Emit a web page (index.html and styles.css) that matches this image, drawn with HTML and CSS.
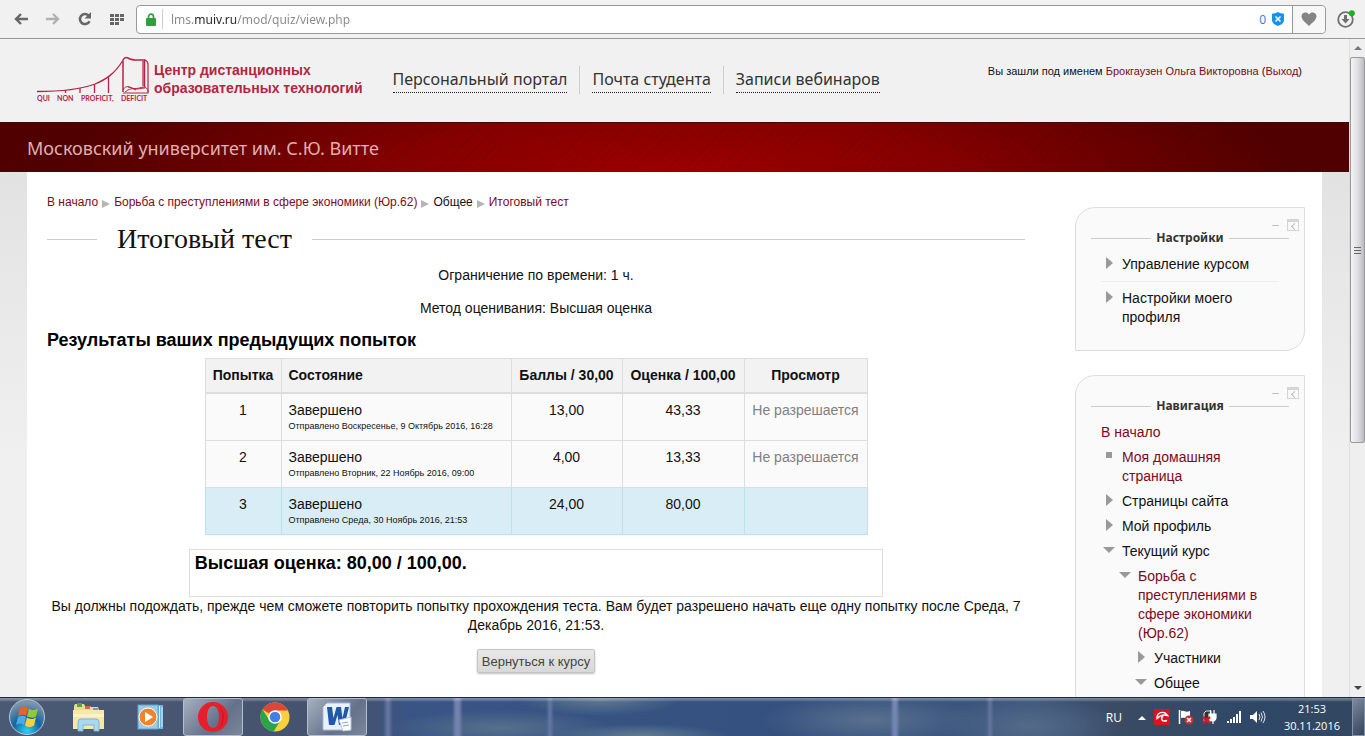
FILE: index.html
```html
<!DOCTYPE html>
<html lang="ru">
<head>
  <meta charset="UTF-8" />
  <title>Итоговый тест</title>
  <link rel="stylesheet" href="styles.css">
</head>
<body>
  <!-- Browser toolbar -->
  <div class="toolbar">
    <button class="tool" aria-label="Назад">
      <svg width="14" height="12" viewBox="0 0 14 12" fill="none" stroke="#666" stroke-width="2.4"><path d="M14 6H2M7 1L2 6l5 5"/></svg>
    </button>
    <button class="tool" aria-label="Вперед">
      <svg width="14" height="12" viewBox="0 0 14 12" fill="none" stroke="#b0b0b0" stroke-width="2.4"><path d="M0 6h12M7 1l5 5-5 5"/></svg>
    </button>
    <button class="tool" aria-label="Обновить">
      <svg width="14" height="14" viewBox="0 0 14 14"><path d="M11.5 9.2A5 5 0 1 1 10.4 3.4" fill="none" stroke="#666" stroke-width="2.6"/><path d="M13 0v6.5H6.500z" fill="#666"/></svg>
    </button>
    <button class="tool" aria-label="Экспресс-панель">
      <svg width="14" height="11" viewBox="0 0 14 11" fill="#666"><path d="M0 0h4v3H0zM5 0h4v3H5zM10 0h4v3h-4zM0 4h4v3H0zM5 4h4v3H5zM10 4h4v3h-4zM0 8h4v3H0zM5 8h4v3H5z"/></svg>
    </button>
    <div class="address">
      <svg width="10" height="13" viewBox="0 0 10 13"><path d="M2.5 6V4a2.5 2.8 0 0 1 5 0v2" fill="none" stroke="#2f9e3d" stroke-width="1.7"/><rect y="5" width="10" height="8" rx="1" fill="#2f9e3d"/></svg>
      <input class="url" type="text" value="lms.muiv.ru/mod/quiz/view.php" aria-label="Адрес">
      <span class="blocked">0</span>
      <svg width="12" height="14" viewBox="0 0 12 14"><path d="M6 0c2 1.3 4 1.7 6 1.7V8c0 3-3 5-6 6-3-1-6-3-6-6V1.7C2 1.7 4 1.3 6 0z" fill="#1592f0"/><path d="M3.5 4.5l5 5m0-5l-5 5" stroke="#fff" stroke-width="1.5"/></svg>
      <button class="heart" aria-label="Добавить в закладки">
        <svg width="16" height="14" viewBox="0 0 16 14"><path d="M8 14C6.5 12 .5 8.500.5 4.300.5.2 6-1 8 2.500 10-1 15.500.2 15.500 4.300 15.500 8.500 9.500 12 8 14z" fill="#848484"/></svg>
      </button>
    </div>
    <button class="tool" aria-label="Загрузки">
      <svg width="18" height="18" viewBox="0 0 18 18"><circle cx="8.5" cy="9.5" r="7.3" fill="none" stroke="#707070" stroke-width="1.8"/><path d="M7 5h3v4h2.500l-4 4.500-4-4.500H7z" fill="#707070"/><circle cx="14.8" cy="3.2" r="3" fill="#1bb31b"/></svg>
    </button>
  </div>

  <div class="viewport">
    <div class="page">
      <header class="site-header">
        <a class="logo" href="#">
          <svg width="112" height="46" viewBox="0 0 112 46" fill="none" stroke="#b32542" stroke-width="1">
            <path d="M0 35.500C22 35.500 42 34 58 28 70 23 78 17 85.500 5" stroke-width="1.3"/>
            <path d="M28.500 34v3M43 32v5M57.500 28v9M71.500 21v16" stroke-width="1.3"/>
            <path d="M86 36V4c1-2 3-3 5-2 5 3 9 2 15 2h1.500v27" stroke-width="1.5"/>
            <path d="M107 4c2 0 4 2 4 4v29H86M106 5v25" stroke-width="1.2"/>
            <path d="M86 34c2-4 5-4 9-2s8-1 13-1c2 1 3 3 3 5M88 36c4-3 7-4 11-3 4 0 6-1 9-1M91 31c3 0 5 2 8 3"/>
            <text class="motto" x="0" y="45">QUI</text>
            <text class="motto" x="20" y="45">NON</text>
            <text class="motto" x="44" y="45">PROFICIT,</text>
            <text class="motto" x="84" y="45">DEFICIT</text>
          </svg>
          <span>Центр дистанционных<br>образовательных технологий</span>
        </a>
        <nav class="top-nav">
          <div><a href="#">Персональный портал</a></div>
          <div><a href="#">Почта студента</a></div>
          <div><a href="#">Записи вебинаров</a></div>
        </nav>
        <p class="login-info">Вы зашли под именем <a href="#">Брокгаузен Ольга Викторовна</a> (<a href="#">Выход</a>)</p>
      </header>

      <div class="banner">Московский университет им. С.Ю. Витте</div>

      <div class="content">
        <main>
          <nav class="breadcrumb">
            <a href="#">В начало</a><i class="crumb"></i><a href="#">Борьба с преступлениями в сфере экономики (Юр.62)</a><i class="crumb"></i><span>Общее</span><i class="crumb"></i><a href="#">Итоговый тест</a>
          </nav>
          <h1>Итоговый тест</h1>
          <p class="info">Ограничение по времени: 1 ч.</p>
          <p class="info">Метод оценивания: Высшая оценка</p>
          <h2>Результаты ваших предыдущих попыток</h2>
          <table class="attempts">
            <colgroup><col class="col-number"><col class="col-state"><col class="col-marks"><col class="col-grade"><col class="col-review"></colgroup>
            <thead>
              <tr><th>Попытка</th><th class="state">Состояние</th><th>Баллы / 30,00</th><th>Оценка / 100,00</th><th>Просмотр</th></tr>
            </thead>
            <tbody>
              <tr><td>1</td><td class="state">Завершено<small>Отправлено Воскресенье, 9 Октябрь 2016, 16:28</small></td><td>13,00</td><td>43,33</td><td class="denied">Не разрешается</td></tr>
              <tr><td>2</td><td class="state">Завершено<small>Отправлено Вторник, 22 Ноябрь 2016, 09:00</small></td><td>4,00</td><td>13,33</td><td class="denied">Не разрешается</td></tr>
              <tr class="best"><td>3</td><td class="state">Завершено<small>Отправлено Среда, 30 Ноябрь 2016, 21:53</small></td><td>24,00</td><td>80,00</td><td></td></tr>
            </tbody>
          </table>
          <div class="feedback"><h3>Высшая оценка: 80,00 / 100,00.</h3></div>
          <p class="wait">Вы должны подождать, прежде чем сможете повторить попытку прохождения теста. Вам будет разрешено начать еще одну попытку после Среда, 7 Декабрь 2016, 21:53.</p>
          <button class="back">Вернуться к курсу</button>
        </main>

        <aside>
          <section class="block">
            <div class="block-tools"><button aria-label="Свернуть блок">–</button><button class="dock" aria-label="Прикрепить блок"></button></div>
            <h4>Настройки</h4>
            <ul class="tree ruled">
              <li><i class="right"></i><span>Управление курсом</span></li>
              <li><i class="right"></i><span>Настройки моего профиля</span></li>
            </ul>
          </section>
          <section class="block">
            <div class="block-tools"><button aria-label="Свернуть блок">–</button><button class="dock" aria-label="Прикрепить блок"></button></div>
            <h4>Навигация</h4>
            <a class="root" href="#">В начало</a>
            <ul class="tree">
              <li><i class="square"></i><a href="#">Моя домашняя страница</a></li>
              <li><i class="right"></i><span>Страницы сайта</span></li>
              <li><i class="right"></i><span>Мой профиль</span></li>
              <li><i class="down"></i><span>Текущий курс</span></li>
              <li class="level-2"><i class="down"></i><a href="#">Борьба с преступлениями в сфере экономики (Юр.62)</a></li>
              <li class="level-3"><i class="right"></i><span>Участники</span></li>
              <li class="level-3"><i class="down"></i><span>Общее</span></li>
            </ul>
          </section>
        </aside>
      </div>
    </div>
    <div class="scrollbar">
      <i class="arrow-up"></i>
      <div class="thumb"><i></i></div>
      <i class="arrow-down"></i>
    </div>
  </div>

  <!-- Windows taskbar -->
  <footer class="taskbar">
    <button class="start" aria-label="Пуск">
      <svg width="38" height="38" viewBox="0 0 38 38">
        <defs><radialGradient id="orb" cx=".5" cy=".9" r=".8"><stop offset="0" stop-color="#2fd0f5"/><stop offset=".5" stop-color="#14659f"/><stop offset="1" stop-color="#7c93ac"/></radialGradient></defs>
        <circle cx="19" cy="19" r="17.5" fill="url(#orb)" stroke="#b4c9da"/>
        <path d="M12 10c3-2 5-2 8 0l-2 8c-3-2-5-1-8 0z" fill="#e8632b"/>
        <path d="M21 10.500c3 2 5 2 9 0l-2 8c-3 2-6 1-9 0z" fill="#93c83e"/>
        <path d="M10 19c3-1 5-2 8 0l-2 8c-3-2-5-2-8 0z" fill="#4da9e8"/>
        <path d="M19 19.500c3 2 6 2 9 0l-2 8c-3 2-6 2-9 0z" fill="#fbd03c"/>
      </svg>
    </button>
    <button class="task" aria-label="Проводник">
      <svg width="34" height="30" viewBox="0 0 34 30"><path d="M3 2h9l1 2h5l1 1h7l1 3h4v19H2V4z" fill="#f3d98a"/><path d="M5 1h5v4H5z" fill="#54a34a"/><path d="M13 4h5v3h-5z" fill="#d86a45"/><path d="M21 6h5v3h-5z" fill="#5c9ed8"/><path d="M1 8h31v19H1z" fill="#f8e8a8"/><path d="M1 12h31v3H1z" fill="#fcf3c9"/><path d="M6 29V20q0-3 3-3h15q3 0 3 3v9h-5v-6H11v6z" fill="#a9d9f2" stroke="#77b5da"/></svg>
    </button>
    <button class="task" aria-label="Проигрыватель">
      <svg width="28" height="26" viewBox="0 0 28 26"><path d="M8 1h18v24H8z" fill="#6fb4dc"/><path d="M22.500 2v22M25 3v20" stroke="#d7effc"/><rect x="1" y="1" width="20" height="24" fill="#9bcbe6" stroke="#5ea4cf"/><circle cx="11" cy="13" r="9" fill="#f08426" stroke="#fff"/><path d="M8 8l8 5-8 5z" fill="#fff"/></svg>
    </button>
    <button class="task open" aria-label="Opera">
      <svg width="32" height="32" viewBox="0 0 32 32"><path fill-rule="evenodd" d="M16 1a15 15 0 1 1 0 30 15 15 0 0 1 0-30zm0 4c-4 0-6 5-6 11s2 11 6 11 6-5 6-11-2-11-6-11z" fill="#e5202b"/><path d="M21 4a15 15 0 0 1 0 24c6-6 6-18 0-24z" fill="#c91a26"/></svg>
    </button>
    <button class="task" aria-label="Chrome">
      <svg width="30" height="30" viewBox="0 0 30 30"><circle cx="15" cy="15" r="14.5" fill="#fcd03b"/><path d="M15 15L2.500 7.500A14.500 14.500 0 0 1 28 8.500H15z" fill="#db4639"/><path d="M2.500 7.500A14.500 14.500 0 0 0 13.500 29.400L20.500 18.500 15 21 9.500 18.500z" fill="#2aa34a"/><circle cx="15" cy="15" r="6.8" fill="#fff"/><circle cx="15" cy="15" r="5.3" fill="#4180e0"/></svg>
    </button>
    <button class="task open" aria-label="Word">
      <svg width="30" height="30" viewBox="0 0 30 30"><path d="M5 1h23v27H1V5z" fill="#e9f1fa" stroke="#a4bbd5"/><path d="M5 5h5l1.500 11L14.500 5H19l1.500 11L23 5h4l-4.500 18H17l-1.500-10L12.500 23H7z" fill="#2258a9"/><path d="M17 18l12-3v13l-8 1z" fill="#fff" stroke="#b4c5da"/><path d="M20 21l6-1M21 24l6-1" stroke="#86a5ca"/></svg>
    </button>
    <div class="tray">
      <span class="lang">RU</span>
      <svg width="8" height="5" viewBox="0 0 8 5"><path d="M0 5l4-4 4 4z" fill="#fff"/></svg>
      <svg width="16" height="16" viewBox="0 0 16 16"><rect width="16" height="16" rx="1" fill="#dc1220"/><path d="M3 9.500C2.500 3.500 10 1 13.500 6.500 10 5.500 6 6.500 3 9.500zM9 6.500c-3 4-1 6.500 4 5" fill="none" stroke="#fff" stroke-width="1.4"/></svg>
      <svg width="16" height="16" viewBox="0 0 16 16"><path d="M1.500 1v14" stroke="#fff" stroke-width="1.5"/><path d="M3 2c4-1 4 2 9 0v7c-5 1-5-1-9 0z" fill="#fff"/><circle cx="11" cy="11" r="4.5" fill="#d3282c"/><path d="M9 9l4 4m0-4l-4 4" stroke="#fff" stroke-width="1.5"/></svg>
      <svg width="16" height="16" viewBox="0 0 16 16"><path d="M2 4l2-2h5v10H2z" fill="#333" stroke="#ddd"/><path d="M7 5h7v4q-1 3-3 3-4 0-4-4zM8.500 1v4M12 1v4M11 12v3" fill="#fff" stroke="#fff" stroke-width="1.2"/><path d="M1 8l7 6m0-6l-7 6" stroke="#d71920" stroke-width="2.4"/></svg>
      <svg width="16" height="12" viewBox="0 0 16 12" fill="#fff"><path d="M1 10h2v2H1zM4 8h2v4H4zM7 6h2v6H7zM10 3h2v9h-2zM13 0h2v12h-2z"/></svg>
      <svg width="16" height="14" viewBox="0 0 16 14"><path d="M0 5h3l4-4v12L3 9H0z" fill="#fff"/><path d="M9 4q2 3 0 6M11 2.500q3 4.500 0 9M13 1q4 6 0 12" fill="none" stroke="#dce6ef"/></svg>
      <div class="clock">21:53<br>30.11.2016</div>
    </div>
    <button class="desktop" aria-label="Свернуть все окна"></button>
  </footer>
</body>
</html>
```
FILE: styles.css
```css
* {
  box-sizing: border-box;
  margin: 0;
  padding: 0;
}

body {
  display: flex;
  flex-direction: column;
  height: 100vh;
  overflow: hidden;
  font-family: "Liberation Sans", Arial, sans-serif;
  font-size: 14px;
  line-height: 19px;
  color: #111;
}

a {
  color: #7d0a1a;
  text-decoration: none;
}

button {
  border: none;
  background: none;
  font-family: inherit;
}

svg {
  flex: none;
  display: block;
}

/* browser toolbar */
.toolbar {
  flex: none;
  display: flex;
  align-items: center;
  gap: 2px;
  height: 39px;
  padding: 0 9px 0 6px;
  background: #f1f1f1;
  border-bottom: 1px solid #999;
}

.tool {
  display: flex;
  align-items: center;
  justify-content: center;
  width: 30px;
  height: 28px;
}

.address {
  flex: 1;
  display: flex;
  align-items: center;
  gap: 6px;
  height: 29px;
  margin: 0 0 0 2px;
  padding-left: 9px;
  background: #fff;
  border: 1px solid #999;
  border-radius: 4px;
}

.url {
  flex: 1;
  height: 20px;
  border: none;
  border-left: 1px solid #ccc;
  padding-left: 8px;
  outline: none;
  font-family: "Noto Sans", "Open Sans", sans-serif;
  font-size: 12px;
  color: #888;
}

/* the domain is darker than the rest of the address */
@supports (-webkit-background-clip: text) {
  .url {
    background: linear-gradient(to right, #888 31px, #222 31px 73px, #888 73px);
    -webkit-background-clip: text;
    -webkit-text-fill-color: transparent;
  }
}

.blocked {
  font-family: "Open Sans", "Noto Sans", sans-serif;
  font-size: 12px;
  color: #1b83d6;
}

.heart {
  display: flex;
  align-items: center;
  justify-content: center;
  width: 33px;
  height: 27px;
  margin-left: 2px;
  background: #f7f7f7;
  border-left: 1px solid #999;
  border-radius: 0 4px 4px 0;
}

.tool:last-child {
  width: 20px;
  margin-left: 8px;
}

/* page */
.viewport {
  flex: 1;
  min-height: 0;
  display: flex;
}

.page {
  flex: 1;
  display: flex;
  flex-direction: column;
  overflow: hidden;
  background: linear-gradient(#e2e2e2 130px, #f0f0f0 420px);
}

.site-header {
  flex: none;
  display: flex;
  height: 83px;
  padding: 17px 47px 0 37px;
  background: #f1f1f1;
}

.logo {
  display: flex;
  gap: 5px;
  color: #b32542;
  font-size: 14px;
  font-weight: bold;
  line-height: 18px;
  white-space: nowrap;
}

.logo span {
  padding-top: 5px;
}

.motto {
  font-family: Lato, sans-serif;
  font-size: 7px;
  font-weight: bold;
  fill: #b32542;
  stroke: none;
}

.top-nav {
  display: flex;
  padding-top: 10px;
  margin-left: 18px;
  font-family: "Noto Sans", "Open Sans", sans-serif;
  font-size: 16px;
  white-space: nowrap;
}

.top-nav div {
  height: 28px;
  padding: 0 12px;
}

.top-nav div + div {
  border-left: 1px solid #ccc;
}

.top-nav a {
  display: block;
  height: 27px;
  line-height: 27px;
  color: #333;
  border-bottom: 1px dotted #222;
}

.login-info {
  margin-left: auto;
  padding-top: 6px;
  font-size: 11px;
  white-space: nowrap;
}

.banner {
  flex: none;
  height: 50px;
  padding-left: 27px;
  border-top: 1px solid #3d0a0a;
  background:
    repeating-linear-gradient(135deg, rgba(0, 0, 0, 0.05) 0 1px, transparent 1px 6px),
    radial-gradient(ellipse 46% 260% at 50% 100%, #9c0000, #850000 45%, #500000);
  color: #e0b0b0;
  font-family: "Noto Sans", "Open Sans", sans-serif;
  font-size: 18px;
  line-height: 50px;
}

.content {
  flex: 1;
  display: flex;
  gap: 50px;
  margin: 0 27px;
  padding: 20px 17px 0 20px;
  background: #fff;
}

main {
  flex: 1;
  display: flex;
  flex-direction: column;
}

.breadcrumb {
  font-size: 12px;
  line-height: 20px;
}

.crumb {
  display: inline-block;
  margin: 0 4px;
  border-left: 8px solid #b5b5b5;
  border-top: 4px solid transparent;
  border-bottom: 4px solid transparent;
  vertical-align: -2px;
}

h1 {
  display: flex;
  align-items: center;
  gap: 20px;
  margin: 9px 0;
  color: #111;
  font-family: "Liberation Serif", Georgia, serif;
  font-size: 28px;
  font-weight: normal;
  line-height: 36px;
}

h1::before,
h1::after {
  content: "";
  width: 50px;
  height: 1px;
  background: #ccc;
}

h1::after {
  flex: 1;
}

.info {
  margin-bottom: 14px;
  text-align: center;
}

h2,
h3 {
  color: #000;
  font-size: 18px;
  line-height: 20px;
}

h2 {
  margin-bottom: 8px;
  margin-top: -2px;
}

.attempts {
  align-self: center;
  border-collapse: collapse;
  background: #fafafa;
  text-align: center;
}

.col-number {
  width: 76px;
}

.col-state {
  width: 230px;
}

.col-marks {
  width: 111px;
}

.col-grade {
  width: 122px;
}

.col-review {
  width: 123px;
}

.attempts th,
.attempts td {
  padding: 7px;
  border: 1px solid #ddd;
  vertical-align: top;
  white-space: nowrap;
}

.attempts th {
  background: #f2f2f2;
  border-bottom-width: 2px;
}

.attempts .state {
  text-align: left;
}

.attempts small {
  display: block;
  font-size: 9px;
  line-height: 13px;
}

.attempts .denied {
  color: #808080;
}

.attempts .best td {
  background: #d9edf7;
  border-color: #bce2ea;
}

.feedback {
  align-self: center;
  width: 71%;
  height: 48px;
  margin-top: 14px;
  padding: 3px 5px;
  border: 1px solid #ddd;
}

.wait {
  text-align: center;
}

.back {
  align-self: center;
  height: 24px;
  margin-top: 14px;
  padding: 0 4px;
  border: 1px solid #c4c4c4;
  border-radius: 2px;
  background: linear-gradient(#e8e8e8, #d8d8d8);
  box-shadow: 0 1px 2px rgba(0, 0, 0, 0.25);
  color: #444;
  font-size: 13px;
}

/* side blocks */
aside {
  flex: none;
  width: 230px;
  padding-top: 15px;
}

.block {
  margin-bottom: 24px;
  padding: 11px 15px 23px;
  background: #fafafa;
  border: 1px solid #ddd;
  border-radius: 20px 0;
}

.block-tools {
  display: flex;
  align-items: center;
  justify-content: flex-end;
  gap: 8px;
  height: 12px;
  margin-right: -10px;
}

.block-tools button {
  color: #bbb;
  font-size: 12px;
  line-height: 12px;
}

.block-tools .dock {
  width: 12px;
  height: 12px;
  border: 1px solid #d5d5d5;
  border-top-width: 3px;
}

.dock::before {
  content: "";
  display: block;
  width: 4px;
  height: 4px;
  margin-left: 4px;
  border-left: 1px solid #bbb;
  border-bottom: 1px solid #bbb;
  transform: rotate(45deg);
}

h4 {
  display: flex;
  align-items: center;
  gap: 5px;
  color: #333;
  font-family: "Noto Sans", "Open Sans", sans-serif;
  font-size: 12px;
  line-height: 14px;
}

h4::before,
h4::after {
  content: "";
  flex: 1;
  height: 1px;
  background: #ccc;
}

.root {
  display: block;
  margin: 10px 10px 0;
}

.tree {
  padding: 0 10px;
  list-style: none;
}

.tree li {
  display: flex;
  align-items: flex-start;
  gap: 7px;
  padding: 6px 0 0 2px;
}

.tree .level-2 {
  padding-left: 18px;
}

.tree .level-3 {
  padding-left: 34px;
}

.tree i {
  flex: none;
  width: 12px;
}

.right::before {
  content: "";
  display: block;
  width: 0;
  margin: 2px 3px;
  border-left: 7px solid #999;
  border-top: 6px solid transparent;
  border-bottom: 6px solid transparent;
}

.down::before {
  content: "";
  display: block;
  margin-top: 5px;
  border-top: 6px solid #999;
  border-left: 6px solid transparent;
  border-right: 6px solid transparent;
}

.square::before {
  content: "";
  display: block;
  width: 6px;
  height: 6px;
  margin: 4px 3px;
  background: #999;
}

.tree.ruled {
  padding-top: 4px;
}

.ruled li + li {
  margin-top: 7px;
  padding-top: 7px;
  border-top: 1px solid #eee;
}

/* window scroll bar */
.scrollbar {
  flex: none;
  display: flex;
  flex-direction: column;
  align-items: center;
  width: 16px;
  padding: 7px 0;
  background: #efefef;
  border-left: 1px solid #ddd;
}

.thumb {
  display: flex;
  align-items: center;
  justify-content: center;
  width: 15px;
  height: 60%;
  margin-top: 7px;
  border: 1px solid #999;
  border-radius: 2px;
  background: linear-gradient(to right, #f4f4f4, #e0e0e4 50%, #bbbbc2);
}

.thumb i {
  width: 7px;
  height: 7px;
  background: repeating-linear-gradient(#666 0 1px, transparent 1px 3px);
}

.arrow-up {
  border-bottom: 4px solid #777;
  border-left: 4px solid transparent;
  border-right: 4px solid transparent;
}

.arrow-down {
  margin-top: auto;
  border-top: 4px solid #444;
  border-left: 4px solid transparent;
  border-right: 4px solid transparent;
}

/* taskbar */
.taskbar {
  flex: none;
  display: flex;
  align-items: center;
  height: 39px;
  padding-left: 8px;
  border-top: 1px solid #1d2b46;
  background:
    linear-gradient(rgba(255, 255, 255, 0.3) 1px, transparent 4px),
    linear-gradient(to right, transparent 383px, #6979a4 388px, transparent 393px 452px, #7381ae 456px 459px, transparent 463px 546px, #6278a5 550px, transparent 554px 890px, #7485b4 894px 896px, transparent 900px 986px, #63759c 990px, transparent 994px),
    radial-gradient(ellipse 80px 16px at 600px 2px, #5e7890, transparent),
    radial-gradient(ellipse 110px 18px at 500px 30px, #56708c, transparent),
    radial-gradient(ellipse 90px 12px at 640px 38px, #617d90, transparent),
    radial-gradient(ellipse 110px 26px at 870px 22px, #5a708f, transparent),
    radial-gradient(ellipse 90px 30px at 1030px 28px, #546a88, transparent),
    linear-gradient(to right, #4b5a74, #45526e 26%, #395585 30%, #34507e 60%, #3c567c 76%, #3a4b63 82%, #2f4868 92%, #33475f);
}

.start {
  width: 38px;
  margin-right: 13px;
}

.task {
  display: flex;
  align-items: center;
  justify-content: center;
  width: 60px;
  height: 38px;
  margin-right: 2px;
}

.task.open {
  border: 1px solid #b5becb;
  border-radius: 3px;
  background: linear-gradient(135deg, #a6b0bf, #64718a 60%, #7b879a);
}

.tray {
  display: flex;
  align-items: center;
  gap: 8px;
  margin-left: auto;
  color: #fff;
  font-family: "Open Sans", "Noto Sans", sans-serif;
  font-size: 12px;
  line-height: 17px;
}

.lang {
  margin-right: 8px;
  font-size: 12px;
}

.clock {
  margin: 0 12px 0 10px;
  font-size: 11px;
  text-align: center;
}

.desktop {
  width: 13px;
  height: 38px;
  border: 1px solid #8491a6;
  background: linear-gradient(135deg, #7c899e, #34445c);
}
```
